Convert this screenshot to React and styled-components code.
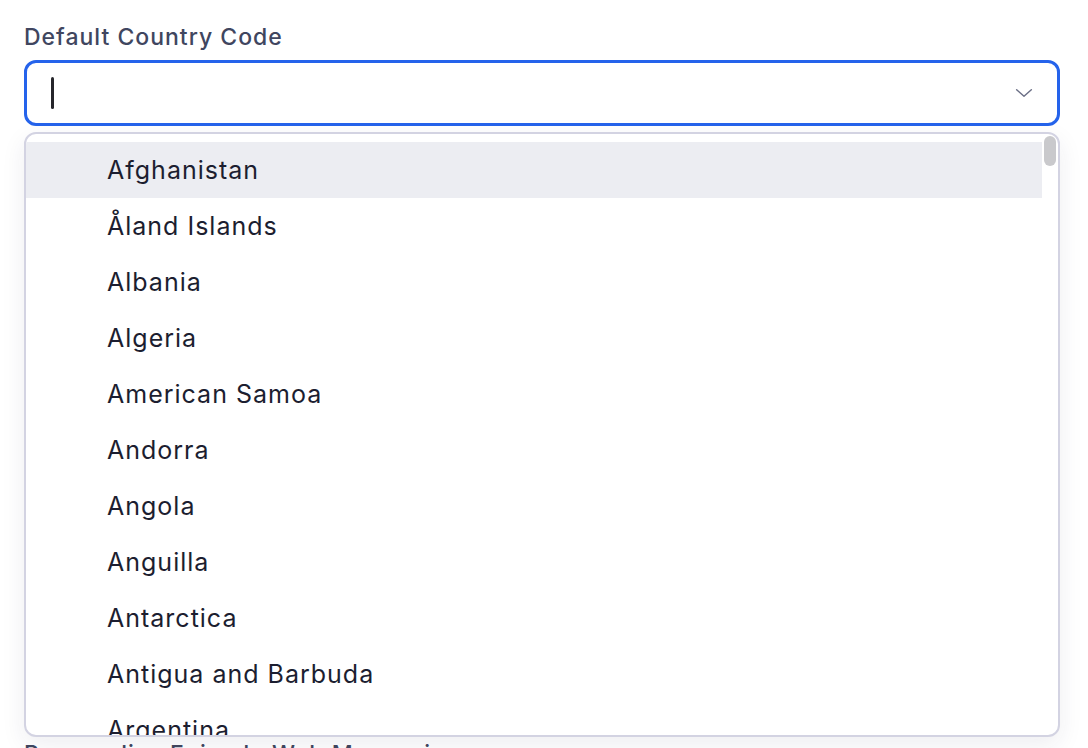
import React, { useState } from "react";
import styled, { createGlobalStyle } from "styled-components";

const GlobalStyle = createGlobalStyle`
  body {
    margin: 0;
    background: #ffffff;
    font-family: Inter, "Noto Sans", sans-serif;
  }
`;

const Page = styled.div`
  padding: 24px 28px 0 24px;
  display: flex;
  flex-direction: column;
  gap: 8px;
`;

const Field = styled.div`
  display: flex;
  flex-direction: column;
  gap: 10px;
  position: relative;
`;

const Label = styled.label`
  font-size: 23px;
  font-weight: 500;
  letter-spacing: 1px;
  color: #40465f;
  line-height: 26px;
`;

const Control = styled.div`
  height: 66px;
  box-sizing: border-box;
  border: 3px solid #2563eb;
  border-radius: 12px;
  display: flex;
  align-items: center;
  padding: 0 22px 0 24px;
  background: #fff;
`;

const Caret = styled.span`
  width: 3px;
  height: 32px;
  border-radius: 2px;
  background: #26262b;
`;

const Spacer = styled.div`
  flex: 1;
`;

const Chevron = styled.svg`
  width: 22px;
  height: 22px;
  color: #6b6f86;
`;

const Menu = styled.div`
  position: absolute;
  top: 108px;
  left: 0;
  right: 0;
  height: 605px;
  box-sizing: border-box;
  border: 2px solid #d3d3e2;
  border-radius: 12px;
  background: #fff;
  box-shadow: 0 8px 24px rgba(40, 40, 80, 0.08);
  overflow: hidden;
  z-index: 2;
  display: flex;
`;

const List = styled.ul`
  list-style: none;
  margin: 0;
  padding: 8px 0 0 0;
  flex: 1;
`;

const Item = styled.li`
  height: 56px;
  display: flex;
  align-items: center;
  padding-left: 81px;
  font-size: 25px;
  letter-spacing: 1px;
  color: #1c1e30;
  background: ${({ $active }) => ($active ? "#ecedf2" : "transparent")};
`;

const Track = styled.div`
  width: 16px;
  padding: 2px 2px 0 0;
  box-sizing: border-box;
`;

const Thumb = styled.div`
  height: 30px;
  width: 12px;
  margin-left: 2px;
  border-radius: 6px;
  background: #c9c9cc;
`;

const NextField = styled.div`
  padding-top: 607px;
`;

const countries = [
  "Afghanistan",
  "Åland Islands",
  "Albania",
  "Algeria",
  "American Samoa",
  "Andorra",
  "Angola",
  "Anguilla",
  "Antarctica",
  "Antigua and Barbuda",
  "Argentina",
];

export default function App() {
  const [active] = useState(0);
  return (
    <>
      <GlobalStyle />
      <Page>
        <Field>
          <Label>Default Country Code</Label>
          <Control>
            <Caret />
            <Spacer />
            <Chevron viewBox="0 0 24 24" fill="none" stroke="currentColor" strokeWidth="1.6" strokeLinecap="round" strokeLinejoin="round">
              <path d="M4 8.5l8 7 8-7" />
            </Chevron>
          </Control>
          <Menu>
            <List>
              {countries.map((c, i) => (
                <Item key={c} $active={i === active}>
                  {c}
                </Item>
              ))}
            </List>
            <Track>
              <Thumb />
            </Track>
          </Menu>
        </Field>
        <NextField>
          <Label>Personalize Episode Web Messaging</Label>
        </NextField>
      </Page>
    </>
  );
}
